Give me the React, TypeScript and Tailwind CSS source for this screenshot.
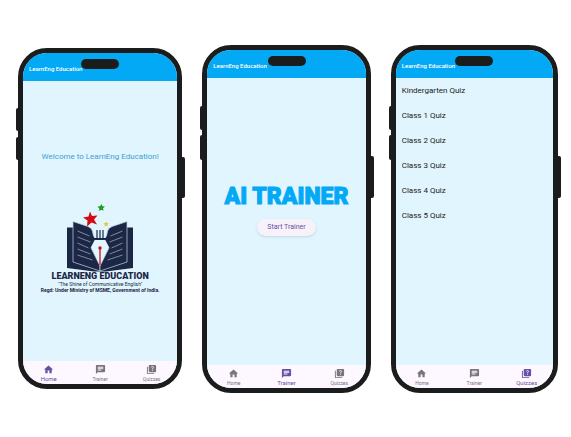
import type { ReactNode } from "react";
import { MdChat, MdHome, MdQuiz } from "react-icons/md";

const tabs = [
  { name: "Home", Icon: MdHome },
  { name: "Trainer", Icon: MdChat },
  { name: "Quizzes", Icon: MdQuiz },
];

const quizzes = ["Kindergarten Quiz", "Class 1 Quiz", "Class 2 Quiz", "Class 3 Quiz", "Class 4 Quiz", "Class 5 Quiz"];

function Phone({ active, frame, children }: { active: string; frame: string; children: ReactNode }) {
  return (
    <section className={`relative min-w-0 ${frame}`}>
      <span className="absolute -left-0.5 top-[17.5%] h-[7%] w-1 rounded-l-xs bg-[#1b1c1c]" />
      <span className="absolute -left-0.5 top-[26%] h-[7%] w-1 rounded-l-xs bg-[#1b1c1c]" />
      <span className="absolute -right-[3px] top-[32%] h-[12%] w-1 rounded-r-xs bg-[#1b1c1c]" />
      <div className="relative flex h-full flex-col overflow-hidden rounded-[29px] border-5 border-[#1b1c1c] bg-[#e1f5fe]">
        <span className="absolute left-1/2 top-1.5 h-2.5 w-[38px] -translate-x-1/2 rounded-full bg-[#1b1c1c]" />
        <header className="flex h-7 shrink-0 items-center bg-[#03a9f4] px-1.5 pt-1">
          <h1 className="text-[6px] font-medium leading-2 text-white">LearnEng Education</h1>
        </header>
        <main className="flex min-h-0 flex-1 flex-col">{children}</main>
        <nav className="grid h-[23px] shrink-0 grid-cols-3 bg-[#fdf7ff]">
          {tabs.map(({ name, Icon }) => (
            <button
              key={name}
              type="button"
              className={`flex flex-col items-center pt-[3px] ${
                name === active ? "text-[6px] text-[#6750a4]" : "text-[5px] text-[#79747e]"
              }`}
            >
              <Icon className="size-[11px]" />
              <span className="leading-2">{name}</span>
            </button>
          ))}
        </nav>
      </div>
    </section>
  );
}

function Emblem() {
  return (
    <svg viewBox="0 0 68 68" className="w-[68px]" aria-hidden="true">
      <path fill="#1c2745" d="M1 23.500h66V64l-27 3.500H28L1 64z" />
      <path fill="#e1f5fe" d="M22 23h24v12H22z" />
      <path
        fill="#1c2745"
        stroke="#c3d6e4"
        strokeWidth=".7"
        d="M7 17.500l15 5q4 1.500 4.500 5 .5 5 3 7.500L25 44l9 18v5L7 58z"
      />
      <path
        fill="#1c2745"
        stroke="#c3d6e4"
        strokeWidth=".7"
        d="M61 17.500l-15 5q-4 1.500-4.500 5-.5 5-3 7.500L43 44l-9 18v5l27-9z"
      />
      <path
        fill="none"
        stroke="#93a5ba"
        strokeWidth=".8"
        d="M11.500 27l12 5M11.500 33l13 5M11.500 39l11 5M11.500 45l13 5M11.500 51l15 5M56.500 27l-12 5M56.500 33l-13 5M56.500 39l-11 5M56.500 45l-13 5M56.500 51l-15 5"
      />
      <path fill="#e1f5fe" d="M29 36h10l4 7.500-9 18.500-9-18.500z" />
      <path fill="none" stroke="#1c2745" strokeWidth="1.200" d="M31 26v8M34 26v8M37 26v8" />
      <path fill="#1c2745" d="M28 34h12v2H28z" />
      <path stroke="#c70d18" strokeWidth="1.300" d="M34 44v17" />
      <circle cx="34" cy="44" r="1.700" fill="#c70d18" />
      <path fill="#d40b12" d="M24 7.500l2 4.500 5.500-.5-3.500 4 3 5-5.500-2-4.500 4 .500-6-4.500-3 5.500-1z" />
      <path fill="#209b22" d="M35.500 0l1 2.300 2.500.2-2 1.700.6 2.500-2.300-1-2.300 1.300.3-2.700-2-1.600 2.600-.4z" />
      <path fill="#f2c230" d="M40 17.500l.8 1.600 1.800-.1-1.200 1.500.6 1.800-1.700-.7-1.600 1 .1-1.900-1.500-1.200 1.900-.4z" />
    </svg>
  );
}

export default function App() {
  return (
    <div className="flex items-start gap-5 pl-[18px] pr-[13px] pt-[45px] font-['Roboto',sans-serif]">
      <Phone active="Home" frame="mt-[3px] aspect-[164/340] flex-[164]">
        <p className="mt-[70px] text-center text-[8px] leading-3 text-[#3c9fd2]">Welcome to LearnEng Education!</p>
        <div className="mt-[41px] flex flex-col items-center whitespace-nowrap text-[#1c2745]">
          <Emblem />
          <h2 className="text-[9px] font-black leading-[9px]">LEARNENG EDUCATION</h2>
          <p className="text-[5px] leading-[6px]">"The Shine of Communicative English"</p>
          <p className="text-[5px] font-bold leading-[6px]">Regd: Under Ministry of MSME, Government of India.</p>
        </div>
      </Phone>
      <Phone active="Trainer" frame="aspect-[168/347] flex-[168]">
        <div className="mt-[105px] flex flex-col items-center gap-2">
          <h2 className="whitespace-nowrap text-[23px] font-black leading-7 text-[#03a9f4] [-webkit-text-stroke:1px_#03a9f4]">
            AI TRAINER
          </h2>
          <button
            type="button"
            className="h-[17px] rounded-full bg-[#f7f2fa] px-2.5 text-[7px] text-[#6750a4] shadow-sm"
          >
            Start Trainer
          </button>
        </div>
      </Phone>
      <Phone active="Quizzes" frame="aspect-[167/347] flex-[167]">
        <ul className="text-[8px] text-[#1d1b20]">
          {quizzes.map((quiz) => (
            <li key={quiz} className="px-1.5 leading-[25px]">
              {quiz}
            </li>
          ))}
        </ul>
      </Phone>
    </div>
  );
}
